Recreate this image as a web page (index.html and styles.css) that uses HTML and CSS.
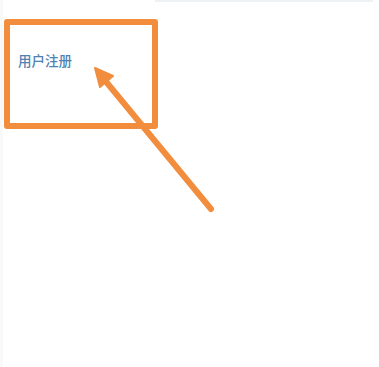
FILE: index.html
```html
<!DOCTYPE html>
<html lang="zh">
<head>
<meta charset="utf-8">
<link rel="stylesheet" href="styles.css">
</head>
<body>
<div class="page">
  <div class="topbar"></div>
  <div class="highlight">
    <span class="label">用户注册</span>
  </div>
  <svg class="arrow" width="379" height="367" viewBox="0 0 379 367">
    <line x1="211" y1="209" x2="103" y2="78" stroke="#f28d3e" stroke-width="6" stroke-linecap="round"/>
    <polygon points="95,68 113,76 100,87" fill="#f28d3e" stroke="#f28d3e" stroke-width="2" stroke-linejoin="round"/>
  </svg>
</div>
</body>
</html>
```
FILE: styles.css
```css
html, body {
  margin: 0;
  padding: 0;
  background: #ffffff;
}
.page {
  position: relative;
  width: 379px;
  height: 367px;
  overflow: hidden;
  border-left: 3px solid #f9f9f9;
  box-sizing: border-box;
  font-family: "Noto Sans CJK SC", "Noto Sans", sans-serif;
}
.topbar {
  height: 2px;
  margin: 0 6px 0 152px;
  background: #eef2f5;
}
.highlight {
  margin: 17px 0 0 1px;
  width: 154px;
  height: 110px;
  box-sizing: border-box;
  border: 6px solid #f28d3e;
  border-radius: 3px;
  padding: 26px 0 0 8px;
}
.label {
  display: block;
  font-size: 13.5px;
  font-weight: 500;
  line-height: 18px;
  color: #4f82b2;
}
.arrow {
  position: absolute;
  left: -3px;
  top: 0;
}
```
